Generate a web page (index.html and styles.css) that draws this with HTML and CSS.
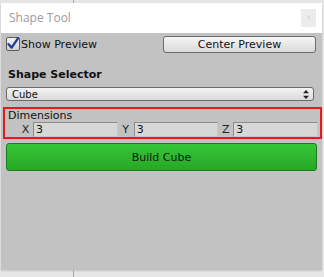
FILE: index.html
```html
<!DOCTYPE html>
<html lang="en">

<head>
    <meta charset="UTF-8">
    <title>Shape Tool</title>
    <link rel="stylesheet" href="styles.css">
</head>

<body>
    <div class="strip strip-top"><div class="tab"></div></div>

    <div class="window">
        <div class="titlebar">
            <span class="title">Shape Tool</span>
            <span class="close">&#215;</span>
        </div>

        <div class="panel">
            <div class="row-preview">
                <label class="toggle">
                    <svg class="check" width="14" height="14" viewBox="0 0 14 14">
                        <defs>
                            <linearGradient id="cb" x1="0" y1="0" x2="0" y2="1">
                                <stop offset="0" stop-color="#f2f2f2" />
                                <stop offset="1" stop-color="#d2d2d2" />
                            </linearGradient>
                        </defs>
                        <rect x="0.5" y="0.5" width="13" height="13" rx="1.5" fill="url(#cb)" stroke="#5a5a5a" />
                        <path d="M2.6 7.2 L5.6 10.6 L11.8 1.6" fill="none" stroke="#20408f" stroke-width="2.4" stroke-linecap="round" stroke-linejoin="round" />
                    </svg>
                    Show Preview
                </label>
                <button class="btn">Center Preview</button>
            </div>

            <h3 class="section">Shape Selector</h3>

            <div class="select">
                <span>Cube</span>
                <svg width="6" height="9" viewBox="0 0 6 9">
                    <path d="M3 0 L6 3.3 L0 3.3 Z M3 9 L6 5.7 L0 5.7 Z" fill="#222" />
                </svg>
            </div>

            <div class="highlight">
                <div class="dim-label">Dimensions</div>
                <div class="fields">
                    <span class="axis">X</span>
                    <div class="field">3</div>
                    <span class="axis">Y</span>
                    <div class="field">3</div>
                    <span class="axis">Z</span>
                    <div class="field">3</div>
                </div>
            </div>

            <button class="build">Build Cube</button>
        </div>
    </div>

    <div class="strip strip-bottom"><div class="tab"></div></div>
</body>

</html>
```

FILE: styles.css
```css
body {
    margin: 0;
    width: 324px;
    height: 277px;
    overflow: hidden;
    background-color: #e6e6e6;
    font-family: "DejaVu Sans", Verdana, sans-serif;
    font-size: 11px;
    color: #111;
    display: flex;
    flex-direction: column;
}

.strip {
    height: 3px;
}

.strip-bottom {
    flex: 1;
}

.strip .tab {
    width: 73px;
    height: 100%;
    border-right: 1px solid #a8a8a8;
}

.window {
    height: 267px;
    margin: 0 2px 0 1px;
    display: flex;
    flex-direction: column;
    box-shadow: 0 1px 2px rgba(0, 0, 0, 0.15);
}

.titlebar {
    height: 30px;
    background-color: #fff;
    display: flex;
    align-items: center;
    justify-content: space-between;
    padding: 0 6px 0 8px;
}

.title {
    font-family: "Open Sans", "Noto Sans", sans-serif;
    font-size: 12px;
    color: #9b9b9b;
    margin-top: -1px;
}

.close {
    width: 15px;
    height: 18px;
    margin-top: -1px;
    background-color: #ececec;
    color: #d8d8d8;
    font-size: 8px;
    line-height: 18px;
    text-align: center;
}

.panel {
    flex: 1;
    background-color: #c2c2c2;
    padding: 3px 5px 0 5px;
    display: flex;
    flex-direction: column;
}

.row-preview {
    display: flex;
    justify-content: space-between;
    align-items: flex-start;
    height: 17px;
}

.toggle {
    display: flex;
    align-items: center;
    gap: 1px;
    margin-top: 1px;
}

.check {
    display: block;
}

.btn {
    width: 153px;
    height: 17px;
    margin-right: 1px;
    padding: 0;
    border: 1px solid #6b6b6b;
    border-radius: 3px;
    background: linear-gradient(#f6f6f6, #d9d9d9);
    font-family: "DejaVu Sans", Verdana, sans-serif;
    font-size: 11px;
    color: #111;
}

.section {
    margin: 15px 0 0 2px;
    font-size: 11px;
    font-weight: bold;
    line-height: 14px;
}

.select {
    height: 14px;
    margin: 5px 3px 0 0;
    padding: 0 4px 0 5px;
    border: 1px solid #6b6b6b;
    border-radius: 3px;
    background: linear-gradient(#f3f3f3, #dadada);
    display: flex;
    align-items: center;
    justify-content: space-between;
    box-sizing: border-box;
    font-size: 10px;
}

.highlight {
    margin: 6px -5px 0 -3px;
    border: 2px solid #e41b1b;
    padding: 0 2px 0 3px;
    height: 32px;
    box-sizing: border-box;
}

.dim-label {
    line-height: 13px;
}

.fields {
    display: grid;
    grid-template-columns: 15px 1fr 16px 1fr 15px 1fr;
    margin-left: 10px;
    height: 15px;
}

.axis {
    text-align: center;
    line-height: 15px;
    color: #222;
}

.field {
    border: 1px solid #8c8c8c;
    border-right-color: #c8c8c8;
    border-bottom-color: #c8c8c8;
    background-color: #d7d7d7;
    line-height: 13px;
    padding-left: 2px;
}

.build {
    height: 28px;
    margin: 4px 0 0 0;
    border: 1px solid #1f7a1f;
    border-radius: 3px;
    background: linear-gradient(#36c636, #26a826);
    font-family: "DejaVu Sans", Verdana, sans-serif;
    font-size: 11px;
    color: #151515;
}
```
